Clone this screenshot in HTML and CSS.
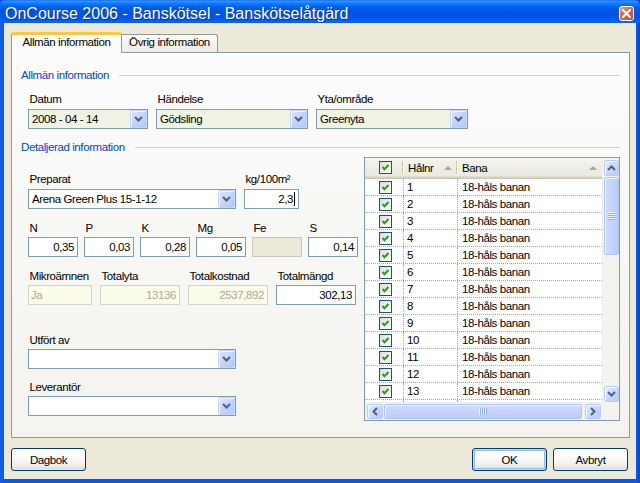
FILE: index.html
```html
<!DOCTYPE html>
<html lang="sv">
<head>
<meta charset="utf-8">
<title>OnCourse 2006 - Banskötsel - Banskötselåtgärd</title>
<link rel="stylesheet" href="styles.css">
</head>
<body>
<div class="window">
  <div class="titlebar">
    <span class="title">OnCourse 2006 - Banskötsel - Banskötselåtgärd</span>
    <span class="close"><svg width="9" height="9" viewBox="0 0 9 9"><path d="M1 1 L8 8 M8 1 L1 8" stroke="#fff" stroke-width="2" stroke-linecap="square"/></svg></span>
  </div>
  <div class="client">
    <div class="tabs">
      <div class="tab active">Allmän information</div>
      <div class="tab">Övrig information</div>
    </div>
    <div class="panel">
      <div class="gtitle g1"><span>Allmän information</span><i class="rule"></i></div>
      <div class="row r1">
        <div class="f w120"><div class="lbl">Datum</div><div class="combo green"><span class="txt">2008 - 04 - 14</span><span class="dd"><svg width="9" height="6" viewBox="0 0 9 6"><polyline points="1,1 4.5,4.5 8,1" fill="none" stroke="#4D6185" stroke-width="2"/></svg></span></div></div>
        <div class="f w152"><div class="lbl">Händelse</div><div class="combo green"><span class="txt">Gödsling</span><span class="dd"><svg width="9" height="6" viewBox="0 0 9 6"><polyline points="1,1 4.5,4.5 8,1" fill="none" stroke="#4D6185" stroke-width="2"/></svg></span></div></div>
        <div class="f w152"><div class="lbl">Yta/område</div><div class="combo green"><span class="txt">Greenyta</span><span class="dd"><svg width="9" height="6" viewBox="0 0 9 6"><polyline points="1,1 4.5,4.5 8,1" fill="none" stroke="#4D6185" stroke-width="2"/></svg></span></div></div>
      </div>
      <div class="gtitle g2"><span>Detaljerad information</span><i class="rule"></i></div>
      <div class="detail">
        <div class="leftcol">
          <div class="row rprep">
            <div class="f w208"><div class="lbl">Preparat</div><div class="combo"><span class="txt">Arena Green Plus 15-1-12</span><span class="dd"><svg width="9" height="6" viewBox="0 0 9 6"><polyline points="1,1 4.5,4.5 8,1" fill="none" stroke="#4D6185" stroke-width="2"/></svg></span></div></div>
            <div class="f w55"><div class="lbl">kg/100m²</div><div class="box num">2,3<i class="caret"></i></div></div>
          </div>
          <div class="row rnpk">
            <div class="f w50"><div class="lbl">N</div><div class="box num">0,35</div></div>
            <div class="f w50"><div class="lbl">P</div><div class="box num">0,03</div></div>
            <div class="f w50"><div class="lbl">K</div><div class="box num">0,28</div></div>
            <div class="f w50"><div class="lbl">Mg</div><div class="box num">0,05</div></div>
            <div class="f w50"><div class="lbl">Fe</div><div class="box off"></div></div>
            <div class="f w50"><div class="lbl">S</div><div class="box num">0,14</div></div>
          </div>
          <div class="row rtot">
            <div class="f w64"><div class="lbl">Mikroämnen</div><div class="box ro">Ja</div></div>
            <div class="f w80"><div class="lbl">Totalyta</div><div class="box ro num">13136</div></div>
            <div class="f w80"><div class="lbl">Totalkostnad</div><div class="box ro num">2537,892</div></div>
            <div class="f w80"><div class="lbl">Totalmängd</div><div class="box num">302,13</div></div>
          </div>
          <div class="row rutf">
            <div class="f w208"><div class="lbl">Utfört av</div><div class="combo"><span class="txt"></span><span class="dd"><svg width="9" height="6" viewBox="0 0 9 6"><polyline points="1,1 4.5,4.5 8,1" fill="none" stroke="#4D6185" stroke-width="2"/></svg></span></div></div>
          </div>
          <div class="row rlev">
            <div class="f w208"><div class="lbl">Leverantör</div><div class="combo"><span class="txt"></span><span class="dd"><svg width="9" height="6" viewBox="0 0 9 6"><polyline points="1,1 4.5,4.5 8,1" fill="none" stroke="#4D6185" stroke-width="2"/></svg></span></div></div>
          </div>
        </div>
        <div class="grid">
          <div class="gtop">
            <div class="gbody">
              <div class="ghead">
                <div class="c1"><span class="cb"><svg width="11" height="11" viewBox="0 0 11 11"><polyline points="2.5,5 4.5,7.2 8.5,3" fill="none" stroke="#21A121" stroke-width="2"/></svg></span></div>
                <div class="c2"><span>Hålnr</span><svg class="arr" width="8" height="4" viewBox="0 0 8 4"><polygon points="0,4 4,0 8,4" fill="#ACA899"/></svg></div>
                <div class="c3"><span>Bana</span><svg class="arr" width="8" height="4" viewBox="0 0 8 4"><polygon points="0,4 4,0 8,4" fill="#ACA899"/></svg></div>
              </div>
              <div class="grow"><div class="c1"><span class="cb"><svg width="11" height="11" viewBox="0 0 11 11"><polyline points="2.5,5 4.5,7.2 8.5,3" fill="none" stroke="#21A121" stroke-width="2"/></svg></span></div><div class="c2">1</div><div class="c3">18-håls banan</div></div>
              <div class="grow"><div class="c1"><span class="cb"><svg width="11" height="11" viewBox="0 0 11 11"><polyline points="2.5,5 4.5,7.2 8.5,3" fill="none" stroke="#21A121" stroke-width="2"/></svg></span></div><div class="c2">2</div><div class="c3">18-håls banan</div></div>
              <div class="grow"><div class="c1"><span class="cb"><svg width="11" height="11" viewBox="0 0 11 11"><polyline points="2.5,5 4.5,7.2 8.5,3" fill="none" stroke="#21A121" stroke-width="2"/></svg></span></div><div class="c2">3</div><div class="c3">18-håls banan</div></div>
              <div class="grow"><div class="c1"><span class="cb"><svg width="11" height="11" viewBox="0 0 11 11"><polyline points="2.5,5 4.5,7.2 8.5,3" fill="none" stroke="#21A121" stroke-width="2"/></svg></span></div><div class="c2">4</div><div class="c3">18-håls banan</div></div>
              <div class="grow"><div class="c1"><span class="cb"><svg width="11" height="11" viewBox="0 0 11 11"><polyline points="2.5,5 4.5,7.2 8.5,3" fill="none" stroke="#21A121" stroke-width="2"/></svg></span></div><div class="c2">5</div><div class="c3">18-håls banan</div></div>
              <div class="grow"><div class="c1"><span class="cb"><svg width="11" height="11" viewBox="0 0 11 11"><polyline points="2.5,5 4.5,7.2 8.5,3" fill="none" stroke="#21A121" stroke-width="2"/></svg></span></div><div class="c2">6</div><div class="c3">18-håls banan</div></div>
              <div class="grow"><div class="c1"><span class="cb"><svg width="11" height="11" viewBox="0 0 11 11"><polyline points="2.5,5 4.5,7.2 8.5,3" fill="none" stroke="#21A121" stroke-width="2"/></svg></span></div><div class="c2">7</div><div class="c3">18-håls banan</div></div>
              <div class="grow"><div class="c1"><span class="cb"><svg width="11" height="11" viewBox="0 0 11 11"><polyline points="2.5,5 4.5,7.2 8.5,3" fill="none" stroke="#21A121" stroke-width="2"/></svg></span></div><div class="c2">8</div><div class="c3">18-håls banan</div></div>
              <div class="grow"><div class="c1"><span class="cb"><svg width="11" height="11" viewBox="0 0 11 11"><polyline points="2.5,5 4.5,7.2 8.5,3" fill="none" stroke="#21A121" stroke-width="2"/></svg></span></div><div class="c2">9</div><div class="c3">18-håls banan</div></div>
              <div class="grow"><div class="c1"><span class="cb"><svg width="11" height="11" viewBox="0 0 11 11"><polyline points="2.5,5 4.5,7.2 8.5,3" fill="none" stroke="#21A121" stroke-width="2"/></svg></span></div><div class="c2">10</div><div class="c3">18-håls banan</div></div>
              <div class="grow"><div class="c1"><span class="cb"><svg width="11" height="11" viewBox="0 0 11 11"><polyline points="2.5,5 4.5,7.2 8.5,3" fill="none" stroke="#21A121" stroke-width="2"/></svg></span></div><div class="c2">11</div><div class="c3">18-håls banan</div></div>
              <div class="grow"><div class="c1"><span class="cb"><svg width="11" height="11" viewBox="0 0 11 11"><polyline points="2.5,5 4.5,7.2 8.5,3" fill="none" stroke="#21A121" stroke-width="2"/></svg></span></div><div class="c2">12</div><div class="c3">18-håls banan</div></div>
              <div class="grow"><div class="c1"><span class="cb"><svg width="11" height="11" viewBox="0 0 11 11"><polyline points="2.5,5 4.5,7.2 8.5,3" fill="none" stroke="#21A121" stroke-width="2"/></svg></span></div><div class="c2">13</div><div class="c3">18-håls banan</div></div>
              <div class="grow"><div class="c1"><span class="cb"><svg width="11" height="11" viewBox="0 0 11 11"><polyline points="2.5,5 4.5,7.2 8.5,3" fill="none" stroke="#21A121" stroke-width="2"/></svg></span></div><div class="c2"></div><div class="c3"></div></div>
            </div>
            <div class="vscroll">
              <span class="sbtn sup"><svg width="9" height="6" viewBox="0 0 9 6"><polyline points="1,5 4.5,1.5 8,5" fill="none" stroke="#4D6185" stroke-width="2"/></svg></span>
              <span class="vthumb"><i></i><i></i><i></i><i></i></span>
              <span class="spacer"></span>
              <span class="sbtn sdown"><svg width="9" height="6" viewBox="0 0 9 6"><polyline points="1,1 4.5,4.5 8,1" fill="none" stroke="#4D6185" stroke-width="2"/></svg></span>
            </div>
          </div>
          <div class="gbottom">
            <div class="hscroll">
              <span class="sbtn sleft"><svg width="6" height="9" viewBox="0 0 6 9"><polyline points="5,1 1.5,4.5 5,8" fill="none" stroke="#4D6185" stroke-width="2"/></svg></span>
              <span class="hthumb"><i></i><i></i><i></i><i></i></span>
              <span class="spacer"></span>
              <span class="sbtn sright"><svg width="6" height="9" viewBox="0 0 6 9"><polyline points="1,1 4.5,4.5 1,8" fill="none" stroke="#4D6185" stroke-width="2"/></svg></span>
            </div>
            <div class="corner"></div>
          </div>
        </div>
      </div>
    </div>
    <div class="footer">
      <button class="btn">Dagbok</button>
      <span class="spacer"></span>
      <button class="btn focus">OK</button>
      <button class="btn">Avbryt</button>
    </div>
  </div>
</div>
</body>
</html>
```

FILE: styles.css
```css
* { box-sizing: border-box; }
html, body { margin: 0; padding: 0; }
body {
  width: 640px; height: 483px; overflow: hidden;
  font-family: "Liberation Sans", Arial, sans-serif;
  font-size: 11.5px; letter-spacing: -0.4px; color: #000;
  background: #0A5CE8;
}
.window {
  width: 640px; height: 483px;
  display: flex; flex-direction: column;
  background: linear-gradient(to right, #0A4FD8 0, #1665EE 1px, #0B58E6 3px, #0B58E6 637px, #0848CF 639px);
}
.titlebar {
  height: 23px; flex: none;
  display: flex; align-items: flex-start;
  color: #fff;
  background: linear-gradient(to bottom, #0A61EB 0px, #3A93FF 1px, #288EFF 2px, #127DFF 3px, #0470F6 5px, #0060EC 7px, #0057E5 10px, #0054E3 14px, #0055EB 18px, #005BF5 20px, #0466F8 22px, #0A5CE8 23px);
  border-radius: 6px 6px 0 0;
}
.title {
  flex: 1; margin: 5px 0 0 5px;
  font-size: 16px; line-height: 18px; letter-spacing: 0;
  text-shadow: 1px 1px 0 #0B2DA8;
  white-space: nowrap;
}
.close {
  width: 15px; height: 15px; margin: 6px 6px 0 0;
  border: 1px solid #fff; border-radius: 3px;
  background: linear-gradient(135deg, #EE9A7D 0%, #DD6B48 40%, #C8441E 100%);
  display: flex; align-items: center; justify-content: center;
}
.close svg { display: block; }
.client {
  flex: 1; margin: 0 4px 4px 4px;
  background: #ECE9D8;
  padding: 9px 6px 0 7px;
  display: flex; flex-direction: column;
}
/* tabs */
.tabs { height: 20px; display: flex; align-items: flex-end; position: relative; z-index: 1; flex: none; }
.tab {
  height: 18px; width: 96px;
  border: 1px solid #919B9C; border-bottom: none; border-left: none;
  border-radius: 0 3px 0 0;
  background: linear-gradient(#FFFFFF, #F3F2EC 60%, #ECEBE6);
  text-align: center; line-height: 15px;
  white-space: nowrap;
}
.tab.active {
  width: 111px; height: 21px; margin-bottom: -1px;
  border-left: 1px solid #919B9C;
  border-top: 3px solid #FFC83C;
  border-radius: 3px 3px 0 0;
  background: #FCFCFE;
}
.panel {
  width: 619px; height: 386px; flex: none;
  border: 1px solid #919B9C;
  background: linear-gradient(#FCFCFE 0%, #F8F8F5 40%, #F4F3EE 100%);
  padding: 0 9px 0 9px;
  display: flex; flex-direction: column;
}
.gtitle { height: 14px; line-height: 14px; display: flex; align-items: center; color: #0046D5; white-space: nowrap; }
.gtitle .rule { flex: 1; height: 1px; background: #D0D0BF; margin-left: 10px; }
.g1 { margin-top: 15px; }
.g2 { margin-top: 11px; }
.row { display: flex; }
.r1 { margin: 10px 0 0 7px; gap: 8px; }
.f { display: flex; flex-direction: column; flex: none; }
.lbl { height: 14px; line-height: 14px; padding-left: 1.5px; margin-bottom: 2px; white-space: nowrap; }
.r1 .lbl, .rprep .lbl { margin-bottom: 3px; }
.w120 { width: 120px; } .w152 { width: 152px; } .w208 { width: 208px; }
.w55 { width: 55px; } .w50 { width: 50px; } .w64 { width: 64px; } .w80 { width: 80px; }
.combo {
  height: 20px; border: 1px solid #7F9DB9; background: #fff;
  display: flex; align-items: center; padding-left: 3px;
}
.combo.green { background: #EFF3E2; }
.combo .txt { flex: 1; white-space: nowrap; overflow: hidden; }
.dd {
  width: 17px; height: 18px; flex: none;
  border: 1px solid #C3D3FD; border-radius: 2px;
  background: linear-gradient(135deg, #DCE6FE 0%, #C4D4FB 50%, #B3C8F7 100%);
  box-shadow: inset 1px 1px 0 #F2F6FF;
  display: flex; align-items: center; justify-content: center;
}
.dd svg { display: block; }
.box {
  height: 20px; border: 1px solid #7F9DB9; background: #fff;
  line-height: 18px; padding: 0 3px 0 2px; white-space: nowrap; overflow: hidden;
}
.box.num { text-align: right; }
.box.ro { background: #FBFBE9; border-color: #D6D4C2; color: #ACA899; }
.box.off { background: #ECE9D8; border-color: #C9C7BA; }
.caret { display: inline-block; width: 1px; height: 14px; background: #000; vertical-align: -3px; margin-left: 1px; }
/* detail */
.detail { display: flex; flex: 1; }
.leftcol { margin-left: 7px; padding-top: 18px; width: 330px; display: flex; flex-direction: column; }
.rprep { gap: 8px; }
.rnpk { gap: 6px; margin-top: 12px; }
.rtot { gap: 8px; margin-top: 12px; }
.rutf { margin-top: 28px; }
.rlev { margin-top: 11px; }
/* grid */
.grid {
  margin-left: auto; margin-top: 3px;
  width: 256px; height: 264px; border: 1px solid #7F9DB9;
  display: flex; flex-direction: column; background: #fff;
}
.gtop { height: 244px; display: flex; }
.gbody { width: 237px; overflow: hidden; background: #fff; }
.ghead, .grow { display: flex; }
.ghead { height: 21px;
  background: linear-gradient(to bottom, #F6F5EE 0, #EDECE0 60%, #EBEADB calc(100% - 3px), #E2DECD calc(100% - 3px), #E2DECD calc(100% - 2px), #D6D2C2 calc(100% - 2px), #D6D2C2 calc(100% - 1px), #CBC7B8 calc(100% - 1px));
}
.c1 { width: 39px; flex: none; display: flex; align-items: center; justify-content: center; padding-left: 2px; }
.c2 { width: 54px; flex: none; padding-left: 3px; white-space: nowrap; }
.c3 { flex: 1; padding-left: 4px; white-space: nowrap; }
.ghead > div { display: flex; align-items: center; line-height: 14px; padding-bottom: 2px; }
.ghead .c1, .ghead .c2 {
  background: linear-gradient(#C7C5B2, #C7C5B2) right 1px top 3px / 1px 13px no-repeat,
              linear-gradient(#FFFFFF, #FFFFFF) right 0 top 3px / 1px 13px no-repeat;
}
.ghead .c2 { padding-left: 4px; justify-content: space-between; padding-right: 6px; }
.ghead .c3 { justify-content: space-between; padding-right: 5px; padding-left: 4px; }
.arr { display: block; margin-top: 1px; }
.grow { height: 17px; border-bottom: 1px dotted #A7A7A7; line-height: 16px; }
.grow .c1, .grow .c2 { border-right: 1px dotted #A7A7A7; }
.cb {
  width: 13px; height: 13px; border: 1px solid #1C5180;
  background: linear-gradient(135deg, #DCDCD7 0%, #F2F2EE 60%, #FFFFFF 100%);
  display: flex; align-items: center; justify-content: center;
}
.cb svg { display: block; }
/* scrollbars */
.vscroll { width: 17px; background: #F4F3EE; display: flex; flex-direction: column; align-items: center; border-left: 1px solid #EFEEE8; }
.spacer { flex: 1; }
.sbtn {
  width: 15px; height: 16px; flex: none;
  border: 1px solid #B8CBF6; border-radius: 2px;
  background: linear-gradient(135deg, #E2EBFE 0%, #CAD8FC 50%, #B6C9F7 100%);
  box-shadow: inset 1px 1px 0 #F6F9FF;
  display: flex; align-items: center; justify-content: center;
}
.sbtn svg { display: block; }
.sup { margin-top: 2px; }
.vthumb {
  width: 15px; height: 78px; margin-top: 1px; flex: none;
  border: 1px solid #AFC4F6; border-radius: 2px;
  background: linear-gradient(to right, #D0DCFD, #C3D3FC 60%, #B8CBF8);
  box-shadow: inset 1px 1px 0 #F0F4FF;
  display: flex; flex-direction: column; align-items: center; justify-content: center; gap: 1px;
}
.vthumb i { display: block; width: 7px; height: 1px; background: #8EAEF2; box-shadow: 0 -1px 0 #EEF4FE; }
.gbottom { height: 18px; display: flex; }
.hscroll { width: 237px; background: #F4F3EE; display: flex; align-items: flex-start; padding-top: 1px; border-top: 1px solid #EFEEE8; }
.hscroll .sbtn { width: 16px; height: 15px; }
.sleft { margin-left: 2px; }
.sright { margin-right: 1px; }
.hthumb {
  width: 198px; height: 15px; margin-left: 1px; flex: none;
  border: 1px solid #AFC4F6; border-radius: 2px;
  background: linear-gradient(to bottom, #D0DCFD, #C3D3FC 60%, #B8CBF8);
  box-shadow: inset 1px 1px 0 #F0F4FF;
  display: flex; align-items: center; justify-content: center; gap: 1px;
}
.hthumb i { display: block; width: 1px; height: 7px; background: #8EAEF2; box-shadow: -1px 0 0 #EEF4FE; }
.corner { width: 17px; background: #F4F3EE; }
/* footer */
.footer { display: flex; margin-top: 10px; gap: 6px; padding-right: 2px; flex: none; }
.btn {
  width: 75px; height: 23px; padding: 0;
  font: inherit; letter-spacing: -0.4px; color: #000;
  border: 1px solid #003C74; border-radius: 3px;
  background: linear-gradient(to bottom, #FFFFFF 0%, #FBFBF9 40%, #F1F1EC 75%, #E3E2DA 92%, #D6D0C5 100%);
  box-shadow: inset 0 -1px 0 #E8E6DD;
}
.btn.focus { box-shadow: inset 0 0 0 1px #C5DAF8, inset 0 0 0 2px #95B8EE; }
```
